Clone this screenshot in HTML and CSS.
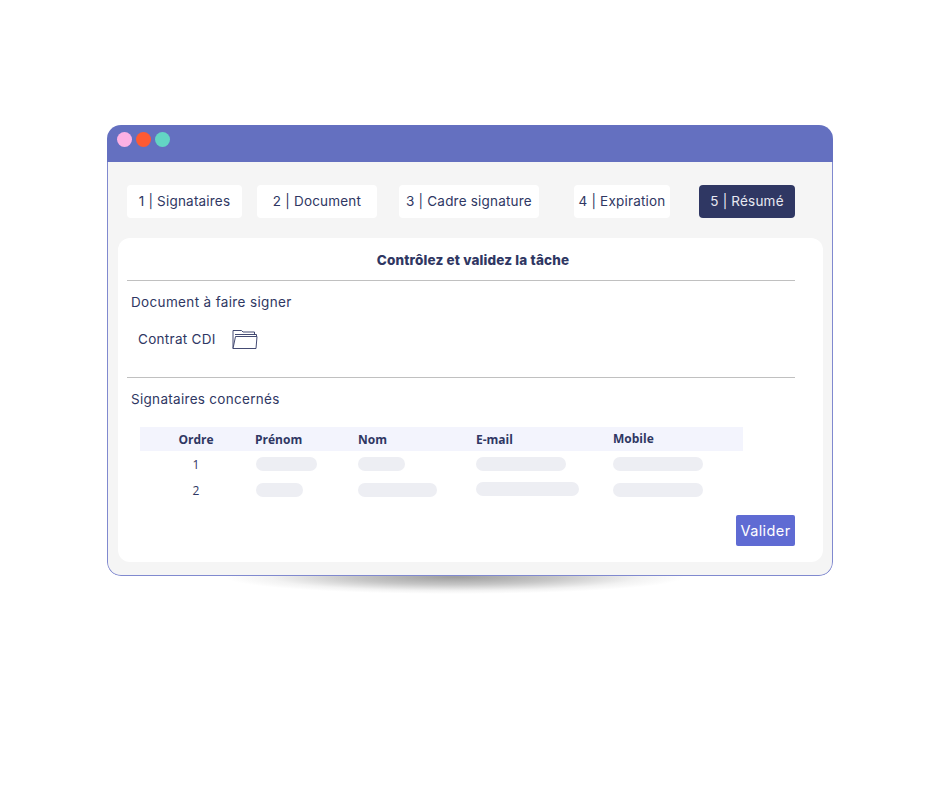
FILE: index.html
```html
<!DOCTYPE html>
<html lang="fr">
<head>
<meta charset="utf-8">
<title>Résumé</title>
<link rel="stylesheet" href="styles.css">
</head>
<body>
<main class="stage">
  <div class="shadow"></div>
  <section class="window">
    <header class="titlebar">
      <span class="dot dot-pink"></span>
      <span class="dot dot-red"></span>
      <span class="dot dot-green"></span>
    </header>
    <div class="body">
      <nav class="tabs">
        <div class="tab tab-1">1 | Signataires</div>
        <div class="tab tab-2">2 | Document</div>
        <div class="tab tab-3">3 | Cadre signature</div>
        <div class="tab tab-4">4 | Expiration</div>
        <div class="tab tab-5">5 | Résumé</div>
      </nav>
      <div class="card">
        <h1 class="title">Contrôlez et validez la tâche</h1>
        <hr class="rule">
        <p class="label label-doc">Document à faire signer</p>
        <div class="doc">
          <span>Contrat CDI</span>
          <svg class="folder" width="26" height="21" viewBox="0 0 26 21" fill="none" stroke="#2f3763" stroke-width="0.9">
            <path d="M1 19.5V1.5h8.5l1.5 1.5h11.5v2.5"/>
            <path d="M3 5.5h21.5v1.5"/>
            <path d="M3.5 7.5h21.5l-1 12H1l2.5-12z" fill="#fff"/>
          </svg>
        </div>
        <hr class="rule rule-2">
        <p class="label label-sig">Signataires concernés</p>
        <div class="table">
          <div class="row head">
            <div class="c-order">Ordre</div>
            <div>Prénom</div>
            <div>Nom</div>
            <div>E-mail</div>
            <div class="up">Mobile</div>
          </div>
          <div class="row">
            <div class="c-order num">1</div>
            <div><span class="pill w61 inset"></span></div>
            <div><span class="pill w47"></span></div>
            <div><span class="pill w90"></span></div>
            <div><span class="pill w90"></span></div>
          </div>
          <div class="row">
            <div class="c-order num">2</div>
            <div><span class="pill w47 inset"></span></div>
            <div><span class="pill w79"></span></div>
            <div><span class="pill w103 up"></span></div>
            <div><span class="pill w90"></span></div>
          </div>
        </div>
        <div class="actions"><button class="validate" type="button">Valider</button></div>
      </div>
    </div>
  </section>
</main>
</body>
</html>
```
FILE: styles.css
```css
* { box-sizing: border-box; }
html, body { margin: 0; background: #fff; }
body { font-family: "Inter", "Liberation Sans", sans-serif; color: #2f3763; }
.stage { position: relative; width: 940px; height: 788px; padding: 125px 107px 0; overflow: hidden; }
.shadow {
  position: absolute; left: 225px; top: 560px; width: 460px; height: 34px;
  background: radial-gradient(closest-side, rgba(60,60,60,.5) 0%, rgba(90,90,90,.34) 45%, rgba(130,130,130,.1) 80%, rgba(255,255,255,0) 100%);
}
.window { position: relative; width: 726px; height: 451px; border-radius: 14px; overflow: hidden; }
.titlebar { height: 37px; background: #6470c0; display: flex; gap: 4px; padding: 7px 0 0 10px; }
.dot { width: 15px; height: 15px; border-radius: 50%; }
.dot-pink { background: #fdb1e4; }
.dot-red { background: #ff5a32; }
.dot-green { background: #63d5c4; }
.body {
  height: 414px; padding: 23px 9px 0 10px; background: #f5f5f5;
  border: 1px solid #8089cf; border-top: 0; border-radius: 0 0 14px 14px;
}
.tabs { display: flex; height: 33px; padding-left: 9px; }
.tab {
  display: flex; align-items: center; justify-content: center; background: #fff; border-radius: 4px;
  padding-bottom: 1px; font-size: 13.5px; white-space: nowrap; letter-spacing: .2px;
}
.tab-1 { width: 115px; }
.tab-2 { width: 120px; margin-left: 15px; }
.tab-3 { width: 140px; margin-left: 22px; }
.tab-4 { width: 96px; margin-left: 35px; }
.tab-5 { width: 96px; margin-left: 29px; background: #2f3763; color: #e8e9f2; }
.card { margin-top: 20px; width: 705px; height: 324px; background: #fff; border-radius: 12px; padding: 13px 9px 0; }
.title { margin: 0; height: 18px; width: 668px; padding-left: 24px; font-size: 13.5px; line-height: 18px; font-weight: 800; text-align: center; letter-spacing: .15px; }
.rule { margin: 11px 0 0; width: 668px; height: 1px; border: 0; background: #c0c0c0; }
.rule-2 { margin-top: 26px; }
.label { margin: 0; font-size: 13.5px; line-height: 18px; letter-spacing: .3px; }
.label-doc { padding: 12px 0 0 4px; box-sizing: content-box; height: 18px; letter-spacing: .35px; }
.label-sig { padding: 12px 0 0 4px; box-sizing: content-box; height: 18px; }
.doc { display: flex; align-items: center; height: 24px; margin-top: 16px; padding-left: 11px; font-size: 13.5px; letter-spacing: .3px; }
.folder { margin-left: 16px; }
.table { margin: 19px 0 0 13px; width: 603px; font-family: "Open Sans", "Noto Sans", sans-serif; }
.row { display: grid; grid-template-columns: 115px 103px 118px 137px 1fr; height: 26px; align-items: center; font-size: 12px; }
.head { height: 24px; background: #f3f4fd; font-weight: 700; }
.c-order { width: 112px; text-align: center; }
.num { font-weight: 400; }
.up { position: relative; top: -1px; }
.pill { display: block; height: 14px; border-radius: 7px; background: #edeef3; }
.inset { margin-left: 1px; }
.w47 { width: 47px; }
.w61 { width: 61px; }
.w79 { width: 79px; }
.w90 { width: 90px; }
.w103 { width: 103px; }
.actions { display: flex; justify-content: flex-end; width: 668px; margin-top: 12px; }
.validate {
  width: 59px; height: 31px; padding: 0; border: 0; border-radius: 2px; background: #5f6bd3; color: #fff;
  font-family: inherit; font-size: 14.5px; letter-spacing: .4px;
}
```
